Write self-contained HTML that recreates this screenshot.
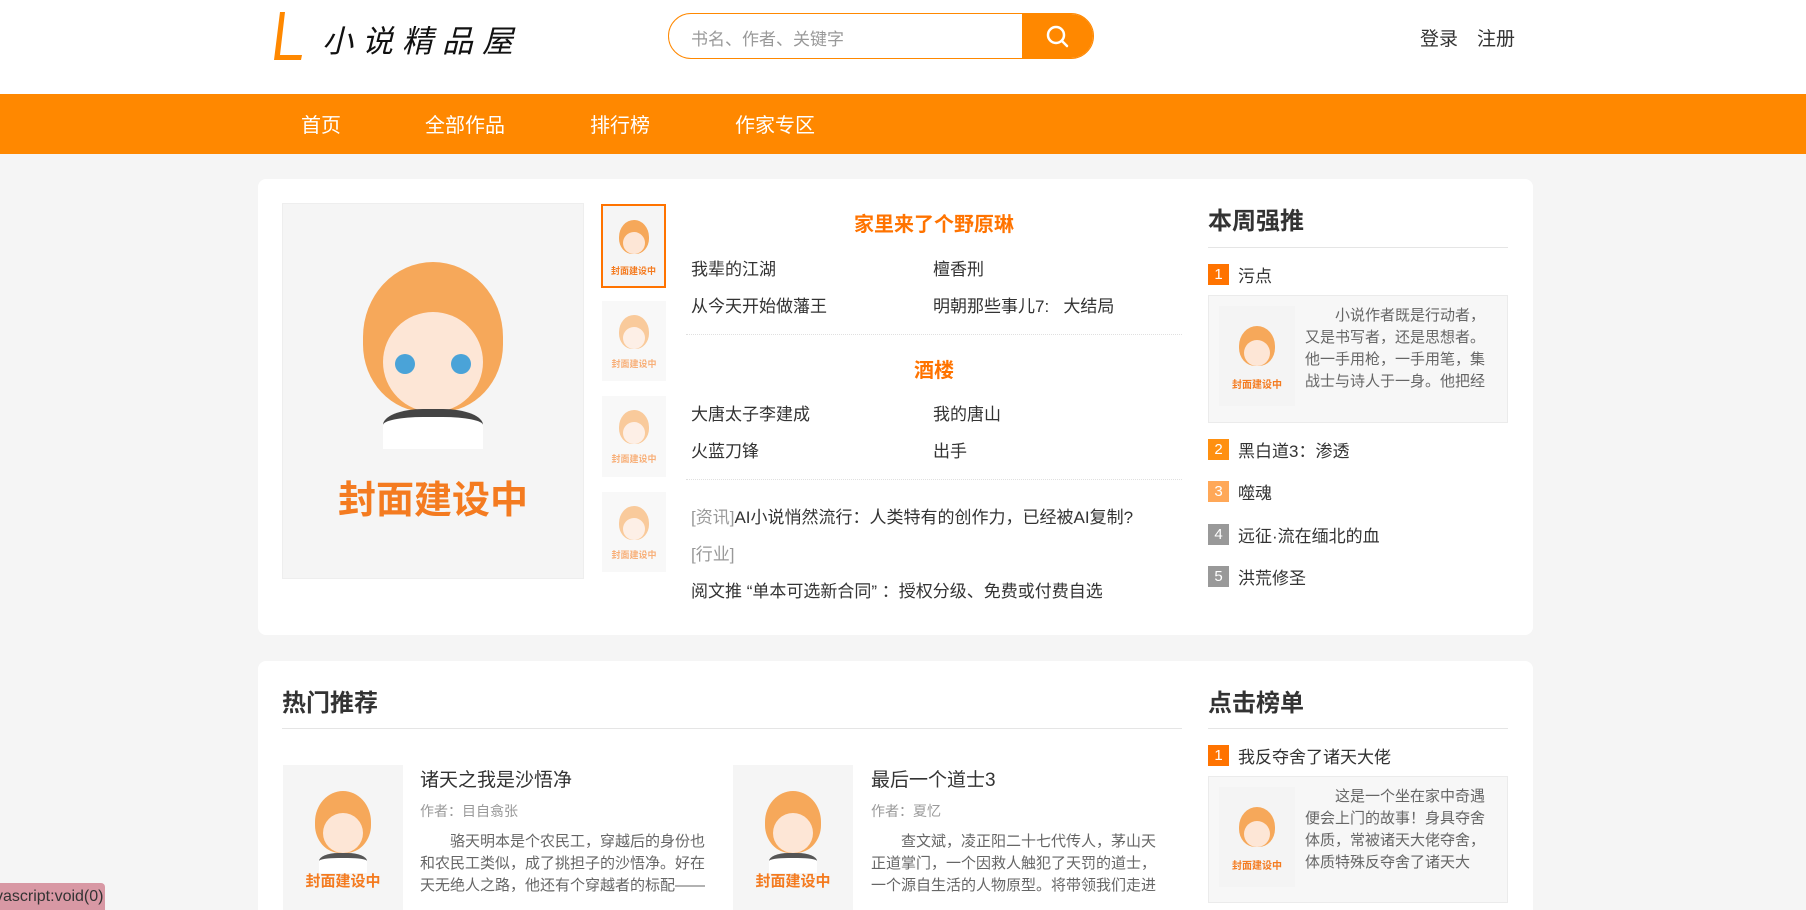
<!DOCTYPE html>
<html><head><meta charset="utf-8"><style>
*{margin:0;padding:0;box-sizing:border-box}
html,body{width:1806px;height:910px;overflow:hidden}
body{background:#f5f5f5;font-family:"Liberation Sans","Noto Sans CJK SC",sans-serif;color:#333;position:relative}
.a{position:absolute;white-space:nowrap}
.hdr{position:absolute;left:0;top:0;width:1806px;height:94px;background:#fff}
.nav{position:absolute;left:0;top:94px;width:1806px;height:60px;background:#ff8800}
.nav span{position:absolute;top:15px;color:#fff;font-size:20px}
.panel{position:absolute;background:#fff;border-radius:8px}
.cov{position:absolute;background:#f5f5f5;overflow:hidden}
.cov .face{position:absolute;left:50%;transform:translateX(-50%);border-radius:50% 50% 45% 45%;background:#f6a85a}
.cov .skin{position:absolute;left:50%;transform:translateX(-50%);border-radius:50%;background:#fde6d6}
.cov .ct{position:absolute;left:0;right:0;text-align:center;color:#f47b20;font-weight:bold}
.t17{font-size:17px;color:#333}
.og{color:#ff7300;font-weight:bold;font-size:20px}
.badge{position:absolute;width:21px;height:21px;color:#fff;font-size:15px;text-align:center;line-height:21px}
.h{font-size:24px;font-weight:bold;color:#333}
.line{position:absolute;height:1px;background:#e5e5e5}
.dl{position:absolute;height:1px;border-top:1px dotted #e0e0e0}
.desc{position:absolute;font-size:15px;color:#666;line-height:22px;white-space:normal;text-indent:2em}
</style></head><body>
<div class="hdr"></div>
<svg class="a" style="left:272px;top:10px" width="32" height="52" viewBox="0 0 32 52"><polygon points="8,2 13,2 8,45 30,45 29,50 2,50" fill="#ff8800"/></svg>
<div class="a" style="left:322px;top:16px;font-size:31px;font-style:italic;letter-spacing:9px;color:#111">小说精品屋</div>
<div class="a" style="left:668px;top:13px;width:426px;height:46px;border:1px solid #ff8800;border-radius:23px;background:#fff;overflow:hidden">
<div class="a" style="left:22px;top:11px;font-size:17px;color:#999">书名、作者、关键字</div>
<div class="a" style="left:353px;top:0;width:72px;height:46px;background:#ff8800">
<svg width="72" height="46" viewBox="0 0 72 46"><circle cx="34" cy="21" r="8" fill="none" stroke="#fff" stroke-width="2.5"/><line x1="40" y1="27" x2="45" y2="32" stroke="#fff" stroke-width="2.5" stroke-linecap="round"/></svg></div></div>
<div class="a" style="left:1420px;top:24px;font-size:19px">登录</div>
<div class="a" style="left:1477px;top:24px;font-size:19px">注册</div>
<div class="nav"><span style="left:301px">首页</span><span style="left:425px">全部作品</span><span style="left:590px">排行榜</span><span style="left:735px">作家专区</span></div>

<div class="panel" style="left:258px;top:179px;width:1275px;height:456px"></div>
<div class="cov" style="left:282px;top:203px;width:302px;height:376px;border:1px solid #eee">
<div class="face" style="top:58px;width:140px;height:150px"></div><div class="skin" style="top:108px;width:100px;height:100px"></div>
<div class="a" style="left:112px;top:150px;width:20px;height:20px;border-radius:50%;background:#4aa3d8"></div><div class="a" style="left:168px;top:150px;width:20px;height:20px;border-radius:50%;background:#4aa3d8"></div>
<div class="a" style="left:100px;top:205px;width:100px;height:40px;background:#fff;border-top:8px solid #444;border-radius:40% 40% 0 0"></div>
<div class="ct" style="top:265px;font-size:38px">封面建设中</div></div>
<div class="cov" style="left:601px;top:204px;width:65px;height:84px;border:2px solid #ff7300"><div class="face" style="top:14px;width:30px;height:34px"></div><div class="skin" style="top:26px;width:22px;height:22px"></div><div class="ct" style="top:58px;font-size:9px">封面建设中</div></div>
<div class="cov" style="left:602px;top:301px;width:64px;height:80px;opacity:.6"><div class="face" style="top:14px;width:30px;height:34px"></div><div class="skin" style="top:26px;width:22px;height:22px"></div><div class="ct" style="top:56px;font-size:9px">封面建设中</div></div>
<div class="cov" style="left:602px;top:396px;width:64px;height:81px;opacity:.6"><div class="face" style="top:14px;width:30px;height:34px"></div><div class="skin" style="top:26px;width:22px;height:22px"></div><div class="ct" style="top:56px;font-size:9px">封面建设中</div></div>
<div class="cov" style="left:602px;top:492px;width:64px;height:80px;opacity:.6"><div class="face" style="top:14px;width:30px;height:34px"></div><div class="skin" style="top:26px;width:22px;height:22px"></div><div class="ct" style="top:56px;font-size:9px">封面建设中</div></div>

<div class="a og" style="left:686px;width:496px;text-align:center;top:208px">家里来了个野原琳</div>
<div class="a t17" style="left:691px;top:255px">我辈的江湖</div><div class="a t17" style="left:933px;top:255px">檀香刑</div>
<div class="a t17" style="left:691px;top:292px">从今天开始做藩王</div><div class="a t17" style="left:933px;top:292px">明朝那些事儿7:&nbsp;&nbsp;&nbsp;大结局</div>
<div class="dl" style="left:686px;top:334px;width:496px"></div>
<div class="a og" style="left:686px;width:496px;text-align:center;top:354px">酒楼</div>
<div class="a t17" style="left:691px;top:400px">大唐太子李建成</div><div class="a t17" style="left:933px;top:400px">我的唐山</div>
<div class="a t17" style="left:691px;top:437px">火蓝刀锋</div><div class="a t17" style="left:933px;top:437px">出手</div>
<div class="dl" style="left:686px;top:479px;width:496px"></div>
<div class="a t17" style="left:691px;top:503px"><span style="color:#999">[资讯]</span>AI小说悄然流行：人类特有的创作力，已经被AI复制?</div>
<div class="a t17" style="left:691px;top:540px;color:#999">[行业]</div>
<div class="a t17" style="left:691px;top:577px">阅文推 “单本可选新合同” ：授权分级、免费或付费自选</div>

<div class="a h" style="left:1208px;top:201px">本周强推</div>
<div class="line" style="left:1208px;top:247px;width:300px"></div>
<div class="badge" style="left:1208px;top:264px;background:#ff7300">1</div><div class="a t17" style="left:1238px;top:262px">污点</div>
<div class="a" style="left:1208px;top:295px;width:300px;height:128px;background:#f7f7f7;border:1px solid #ebebeb"></div>
<div class="cov" style="left:1219px;top:306px;width:76px;height:100px;background:#f4f4f4"><div class="face" style="top:20px;width:36px;height:40px"></div><div class="skin" style="top:34px;width:26px;height:26px"></div><div class="ct" style="top:70px;font-size:10px">封面建设中</div></div>
<div class="desc" style="left:1305px;top:305px;width:192px">小说作者既是行动者，又是书写者，还是思想者。他一手用枪，一手用笔，集战士与诗人于一身。他把经</div>
<div class="badge" style="left:1208px;top:439px;background:#ff9010">2</div><div class="a t17" style="left:1238px;top:437px">黑白道3：渗透</div>
<div class="badge" style="left:1208px;top:481px;background:#ffa858">3</div><div class="a t17" style="left:1238px;top:479px">噬魂</div>
<div class="badge" style="left:1208px;top:524px;background:#999">4</div><div class="a t17" style="left:1238px;top:522px">远征·流在缅北的血</div>
<div class="badge" style="left:1208px;top:566px;background:#999">5</div><div class="a t17" style="left:1238px;top:564px">洪荒修圣</div>

<div class="panel" style="left:258px;top:661px;width:1275px;height:249px;border-radius:8px 8px 0 0"></div>
<div class="a h" style="left:282px;top:683px">热门推荐</div>
<div class="line" style="left:282px;top:728px;width:900px"></div>
<div class="a h" style="left:1208px;top:683px">点击榜单</div>
<div class="line" style="left:1208px;top:728px;width:300px"></div>
<div class="badge" style="left:1208px;top:745px;background:#ff7300">1</div><div class="a t17" style="left:1238px;top:743px">我反夺舍了诸天大佬</div>
<div class="a" style="left:1208px;top:776px;width:300px;height:127px;background:#f7f7f7;border:1px solid #ebebeb"></div>
<div class="cov" style="left:1219px;top:787px;width:76px;height:100px;background:#f4f4f4"><div class="face" style="top:20px;width:36px;height:40px"></div><div class="skin" style="top:34px;width:26px;height:26px"></div><div class="ct" style="top:70px;font-size:10px">封面建设中</div></div>
<div class="desc" style="left:1305px;top:786px;width:192px">这是一个坐在家中奇遇便会上门的故事！身具夺舍体质，常被诸天大佬夺舍，体质特殊反夺舍了诸天大</div>

<div class="cov" style="left:283px;top:765px;width:120px;height:150px"><div class="face" style="top:26px;width:56px;height:62px"></div><div class="skin" style="top:48px;width:40px;height:40px"></div><div class="a" style="left:36px;top:88px;width:48px;height:20px;background:#fff;border-top:5px solid #555;border-radius:40% 40% 0 0"></div><div class="ct" style="top:105px;font-size:15px">封面建设中</div></div>
<div class="a" style="left:420px;top:765px;font-size:19px">诸天之我是沙悟净</div>
<div class="a" style="left:420px;top:801px;font-size:14px;color:#999">作者：目自翕张</div>
<div class="desc" style="left:420px;top:831px;width:290px">骆天明本是个农民工，穿越后的身份也和农民工类似，成了挑担子的沙悟净。好在天无绝人之路，他还有个穿越者的标配——</div>
<div class="cov" style="left:733px;top:765px;width:120px;height:150px"><div class="face" style="top:26px;width:56px;height:62px"></div><div class="skin" style="top:48px;width:40px;height:40px"></div><div class="a" style="left:36px;top:88px;width:48px;height:20px;background:#fff;border-top:5px solid #555;border-radius:40% 40% 0 0"></div><div class="ct" style="top:105px;font-size:15px">封面建设中</div></div>
<div class="a" style="left:871px;top:765px;font-size:19px">最后一个道士3</div>
<div class="a" style="left:871px;top:801px;font-size:14px;color:#999">作者：夏忆</div>
<div class="desc" style="left:871px;top:831px;width:290px">查文斌，凌正阳二十七代传人，茅山天正道掌门，一个因救人触犯了天罚的道士，一个源自生活的人物原型。将带领我们走进</div>

<div class="a" style="left:0;top:883px;width:105px;height:27px;background:#d898a4;border-radius:0 4px 0 0;font-size:16px;line-height:27px;overflow:hidden;color:#333"><span style="margin-left:-5px">vascript:void(0)</span></div>
</body></html>
